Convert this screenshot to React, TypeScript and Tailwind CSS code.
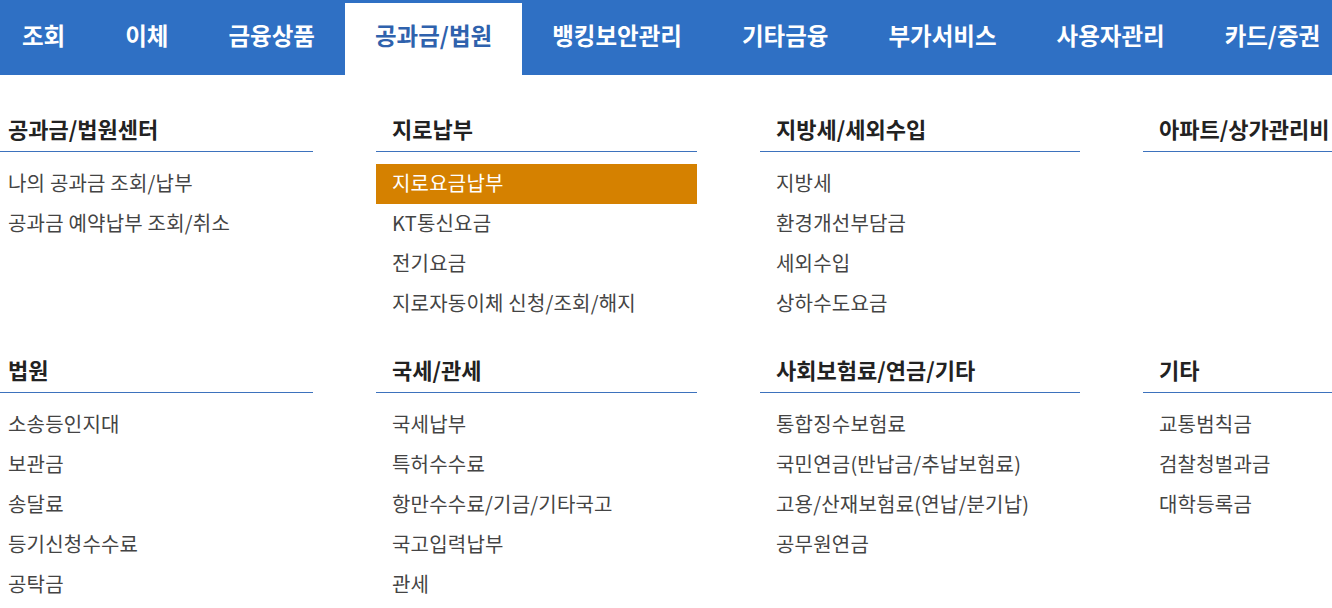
import React from "react";

const tabs = ["조회", "이체", "금융상품", "공과금/법원", "뱅킹보안관리", "기타금융", "부가서비스", "사용자관리", "카드/증권"];

type Section = { title: string; items: string[] };

const row1: Section[] = [
  { title: "공과금/법원센터", items: ["나의 공과금 조회/납부", "공과금 예약납부 조회/취소"] },
  { title: "지로납부", items: ["지로요금납부", "KT통신요금", "전기요금", "지로자동이체 신청/조회/해지"] },
  { title: "지방세/세외수입", items: ["지방세", "환경개선부담금", "세외수입", "상하수도요금"] },
  { title: "아파트/상가관리비", items: [] },
];

const row2: Section[] = [
  { title: "법원", items: ["소송등인지대", "보관금", "송달료", "등기신청수수료", "공탁금"] },
  { title: "국세/관세", items: ["국세납부", "특허수수료", "항만수수료/기금/기타국고", "국고입력납부", "관세"] },
  { title: "사회보험료/연금/기타", items: ["통합징수보험료", "국민연금(반납금/추납보험료)", "고용/산재보험료(연납/분기납)", "공무원연금"] },
  { title: "기타", items: ["교통범칙금", "검찰청벌과금", "대학등록금"] },
];

function Col({ s }: { s: Section }) {
  return (
    <div className="flex flex-col">
      <div className="h-[45px] flex items-center pl-4 pb-[2px] border-b border-[#3d72bd] text-[22px] font-bold text-[#222] whitespace-nowrap">
        {s.title}
      </div>
      <ul className="mt-3 flex flex-col">
        {s.items.map((it) => {
          const active = it === "지로요금납부";
          return (
            <li
              key={it}
              className={
                "h-10 flex items-center pl-4 pb-[3px] text-[20px] tracking-[0.2px] whitespace-nowrap " +
                (active ? "bg-[#d58100] text-white" : "text-[#444]")
              }
            >
              {it}
            </li>
          );
        })}
      </ul>
    </div>
  );
}

export default function App() {
  return (
    <div
      className="w-[1332px] h-[608px] overflow-hidden bg-white"
      style={{ fontFamily: '"Noto Sans CJK KR", "Noto Sans", sans-serif' }}
    >
      <nav className="h-[75px] bg-[#2f70c4] flex items-end">
        <div className="flex ml-[-8px] h-[72px]">
          {tabs.map((t) => {
            const active = t === "공과금/법원";
            return (
              <div
                key={t}
                className={
                  "px-[30px] flex items-center pb-[6px] text-[23.5px] font-bold whitespace-nowrap " +
                  (active ? "bg-white text-[#2f62ad]" : "text-white")
                }
              >
                {t}
              </div>
            );
          })}
        </div>
      </nav>
      <div className="ml-[-8px] pt-[32px] grid grid-cols-[321px_321px_320px_321px] gap-x-[63px] gap-y-[24px]">
        {row1.map((s) => (
          <Col key={s.title} s={s} />
        ))}
        {row2.map((s) => (
          <Col key={s.title} s={s} />
        ))}
      </div>
    </div>
  );
}
